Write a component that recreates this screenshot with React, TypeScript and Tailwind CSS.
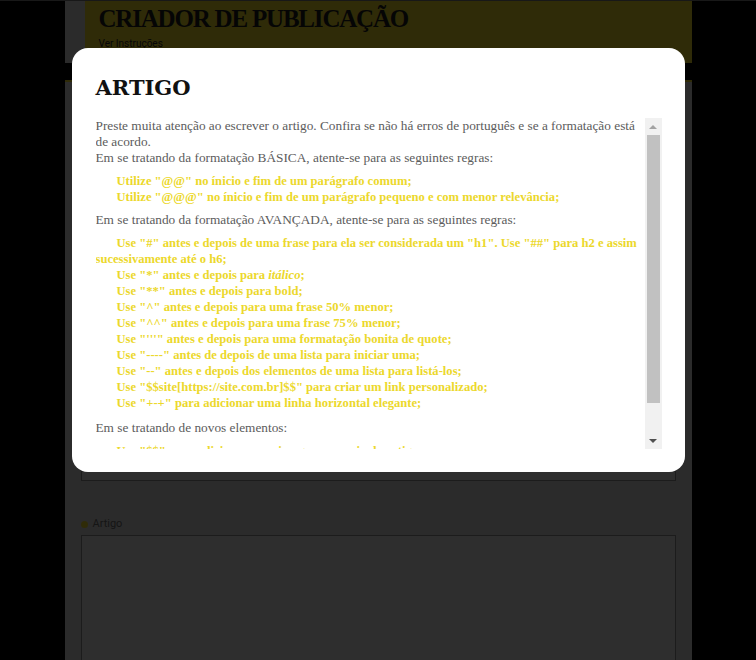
import type { ReactNode } from "react";

const BASIC = [
  'Utilize "@@" no ínicio e fim de um parágrafo comum;',
  'Utilize "@@@" no ínicio e fim de um parágrafo pequeno e com menor relevância;',
];

const ADVANCED: ReactNode[] = [
  'Use "#" antes e depois de uma frase para ela ser considerada um "h1". Use "##" para h2 e assim sucessivamente até o h6;',
  <>{'Use "*" antes e depois para '}<i>itálico</i>;</>,
  'Use "**" antes e depois para bold;',
  'Use "^" antes e depois para uma frase 50% menor;',
  'Use "^^" antes e depois para uma frase 75% menor;',
  'Use "\'\'\'" antes e depois para uma formatação bonita de quote;',
  'Use "----" antes de depois de uma lista para iniciar uma;',
  'Use "--" antes e depois dos elementos de uma lista para listá-los;',
  'Use "$$site[https://site.com.br]$$" para criar um link personalizado;',
  'Use "+-+" para adicionar uma linha horizontal elegante;',
];

const NEW_ITEMS = [
  'Use "$$" para adicionar uma imagem no meio do artigo;',
  'Use "%%" para adicionar um vídeo do youtube;',
];

function Rules({ items }: { items: ReactNode[] }) {
  return (
    <div className="my-[7px] text-[12.6px] font-bold text-[#ecd82c]">
      {items.map((it, i) => (
        <p key={i} className="indent-[21px]">
          {it}
        </p>
      ))}
    </div>
  );
}

function Field({ label, h }: { label: string; h: string }) {
  return (
    <div className="mb-[35px]">
      <div className="mb-[3px] flex items-center gap-[5px] text-[11px] leading-4 text-[#6b6b6b]">
        <span className="h-[7px] w-[7px] rounded-full bg-[#e9d42c]" />
        {label}
      </div>
      <div className={`${h} border border-[#8a8a8a] bg-[#e6e6e6]`} />
    </div>
  );
}

function Scrollbar() {
  return (
    <div className="flex w-[17px] shrink-0 flex-col bg-[#f1f1f1]">
      <div className="flex h-[17px] items-center justify-center">
        <span className="h-0 w-0 border-x-[4px] border-b-[4px] border-x-transparent border-b-[#a3a3a3]" />
      </div>
      <div className="mx-[2px] h-[268px] bg-[#c1c1c1]" />
      <div className="flex-1" />
      <div className="flex h-[17px] items-center justify-center">
        <span className="h-0 w-0 border-x-[4px] border-t-[4px] border-x-transparent border-t-[#505050]" />
      </div>
    </div>
  );
}

export default function App() {
  return (
    <div className="min-h-screen border-t border-[#7a7a7a] bg-black font-['Roboto',sans-serif]">
      <div className="mx-auto w-[627px]">
        <header className="h-[62px] bg-[#d7d7d7] pl-5">
          <div className="h-full bg-[#e9d42c] pl-[14px] pt-[3px]">
            <h1 className="font-['Liberation_Serif',serif] text-[25px] font-bold leading-[30px] tracking-[-1.2px] text-[#1a1a1a]">
              CRIADOR DE PUBLICAÇÃO
            </h1>
            <a className="mt-[2px] block text-[10px] text-[#222]">Ver Instruções</a>
          </div>
        </header>

        <main className="mt-[17px] border-t-2 border-[#e9d42c] bg-[#d7d7d7] px-4 pt-6 pb-10">
          <Field label="Título" h="h-9" />
          <Field label="Imagem de capa" h="h-[120px]" />
          <Field label="Resumo" h="h-[92px]" />
          <Field label="Artigo" h="h-[300px]" />
        </main>
      </div>

      <div className="fixed inset-0 flex justify-center bg-black/80 pt-12">
        <div className="h-[424px] w-[613px] rounded-2xl bg-white pt-6 pl-6 pr-[23px]">
          <h2 className="mb-[14px] font-['DejaVu_Serif',serif] text-[21px] font-bold leading-8 text-[#111]">
            ARTIGO
          </h2>
          <div className="flex h-[331px]">
            <div className="flex-1 overflow-hidden font-['Liberation_Serif',serif] text-[13.3px] leading-4 text-[#5c5c5c]">
              <p>
                Preste muita atenção ao escrever o artigo. Confira se não há erros de português e se a formatação está de acordo.
                <br />
                Em se tratando da formatação BÁSICA, atente-se para as seguintes regras:
              </p>
              <Rules items={BASIC} />
              <p>Em se tratando da formatação AVANÇADA, atente-se para as seguintes regras:</p>
              <Rules items={ADVANCED} />
              <p className="pt-[2px]">Em se tratando de novos elementos:</p>
              <Rules items={NEW_ITEMS} />
            </div>
            <Scrollbar />
          </div>
        </div>
      </div>
    </div>
  );
}
